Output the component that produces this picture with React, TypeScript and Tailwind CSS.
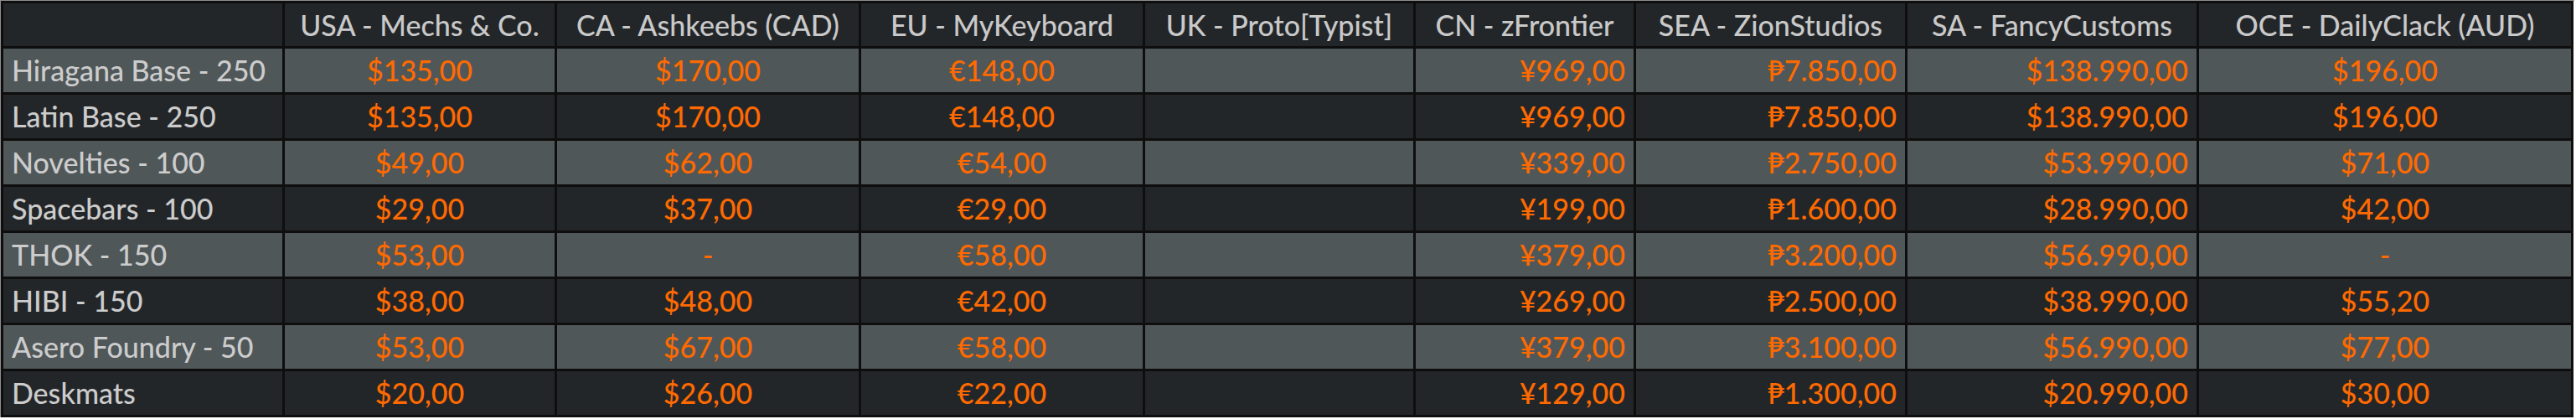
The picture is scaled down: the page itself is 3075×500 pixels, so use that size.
const headers = [
  'USA - Mechs & Co.',
  'CA - Ashkeebs (CAD)',
  'EU - MyKeyboard',
  'UK - Proto[Typist]',
  'CN - zFrontier',
  'SEA - ZionStudios',
  'SA - FancyCustoms',
  'OCE - DailyClack (AUD)',
];

const rows: [string, string[]][] = [
  ['Hiragana Base - 250', ['$135,00', '$170,00', '€148,00', '', '¥969,00', '₱7.850,00', '$138.990,00', '$196,00']],
  ['Latin Base - 250', ['$135,00', '$170,00', '€148,00', '', '¥969,00', '₱7.850,00', '$138.990,00', '$196,00']],
  ['Novelties - 100', ['$49,00', '$62,00', '€54,00', '', '¥339,00', '₱2.750,00', '$53.990,00', '$71,00']],
  ['Spacebars - 100', ['$29,00', '$37,00', '€29,00', '', '¥199,00', '₱1.600,00', '$28.990,00', '$42,00']],
  ['THOK - 150', ['$53,00', '-', '€58,00', '', '¥379,00', '₱3.200,00', '$56.990,00', '-']],
  ['HIBI - 150', ['$38,00', '$48,00', '€42,00', '', '¥269,00', '₱2.500,00', '$38.990,00', '$55,20']],
  ['Asero Foundry - 50', ['$53,00', '$67,00', '€58,00', '', '¥379,00', '₱3.100,00', '$56.990,00', '$77,00']],
  ['Deskmats', ['$20,00', '$26,00', '€22,00', '', '¥129,00', '₱1.300,00', '$20.990,00', '$30,00']],
];

// per-column alignment of the price cells
const align = [
  'text-center',
  'text-center',
  'text-center',
  'text-center',
  'text-right',
  'text-right',
  'text-right',
  'text-center',
];

const widths = ['w-[336px]', 'w-[325px]', 'w-[363px]', 'w-[339px]', 'w-[323px]', 'w-[263px]', 'w-[324px]', 'w-[348px]', 'w-[447px]'];

export default function App() {
  return (
    <div className="w-[3075px] h-[500px] bg-white">
      <div className="w-[3073px] border-t border-l border-[#8e8e8e]">
        <table className="table-fixed border-collapse font-['Lato','Liberation_Sans',sans-serif] text-[34px] font-medium leading-none">
          <colgroup>
            {widths.map((w, i) => (
              <col key={i} className={w} />
            ))}
          </colgroup>
          <thead>
            <tr className="h-[54px] bg-[#232629] text-[#c9c9c9]">
              <th className="border-[3px] border-[#0e0e0e]" />
              {headers.map(h => (
                <th key={h} className="border-[3px] border-[#0e0e0e] px-[10px] font-medium text-center">
                  {h}
                </th>
              ))}
            </tr>
          </thead>
          <tbody>
            {rows.map(([label, prices], r) => (
              <tr key={label} className={`h-[55px] ${r % 2 === 0 ? 'bg-[#4f5759]' : 'bg-[#232629]'}`}>
                <td className="border-[3px] border-[#0e0e0e] px-[10px] text-left text-[#cccccc]">{label}</td>
                {prices.map((p, c) => (
                  <td key={c} className={`border-[3px] border-[#0e0e0e] px-[10px] text-[#ff6a00] ${align[c]}`}>
                    {p}
                  </td>
                ))}
              </tr>
            ))}
          </tbody>
        </table>
      </div>
    </div>
  );
}
